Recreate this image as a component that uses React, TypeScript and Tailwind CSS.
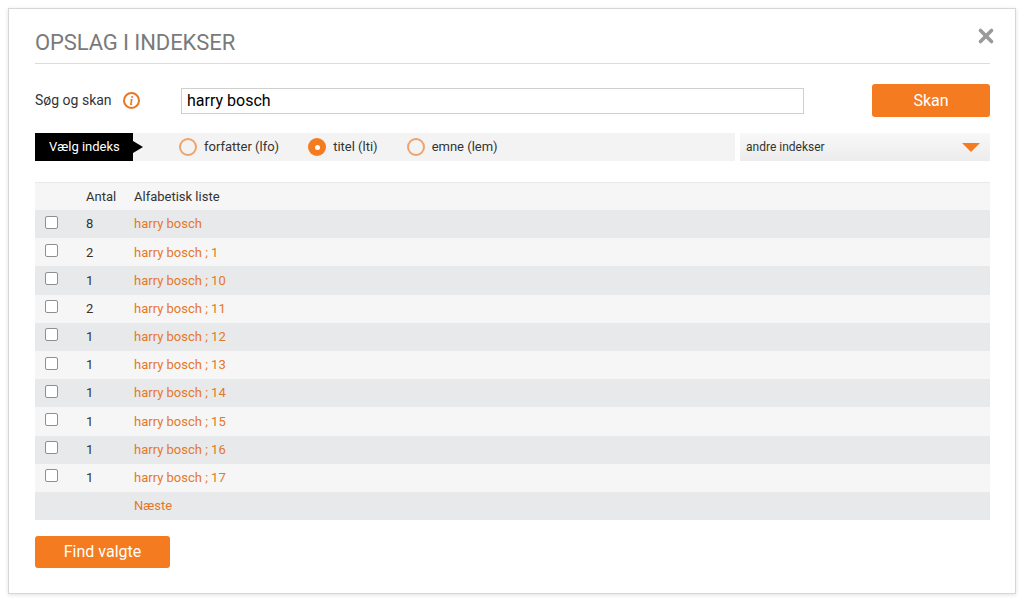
import { X } from 'lucide-react';

const rows = [
    { antal: 8, label: 'harry bosch' },
    { antal: 2, label: 'harry bosch ; 1' },
    { antal: 1, label: 'harry bosch ; 10' },
    { antal: 2, label: 'harry bosch ; 11' },
    { antal: 1, label: 'harry bosch ; 12' },
    { antal: 1, label: 'harry bosch ; 13' },
    { antal: 1, label: 'harry bosch ; 14' },
    { antal: 1, label: 'harry bosch ; 15' },
    { antal: 1, label: 'harry bosch ; 16' },
    { antal: 1, label: 'harry bosch ; 17' },
];

function Radio({ label, checked }: { label: string; checked?: boolean }) {
    return (
        <label className="flex items-center gap-[7px] text-[13px] text-[#333]">
            {checked ? (
                <span className="w-[18px] h-[18px] rounded-full bg-[#f47b20] flex items-center justify-center">
                    <span className="w-[5px] h-[5px] rounded-full bg-white" />
                </span>
            ) : (
                <span className="w-[18px] h-[18px] rounded-full border-2 border-[#eea36c] bg-[#f3f3f3]" />
            )}
            {label}
        </label>
    );
}

export default function App() {
    return (
        <div className="w-[1024px] h-[602px] bg-white pt-2 pl-2 font-['Roboto',sans-serif]">
            <div className="w-[1008px] h-[586px] bg-white border border-[#d6d6d6] shadow-[0_1px_4px_rgba(0,0,0,0.12)] pl-[26px] pr-[25px] pt-[20px] relative">
                {/* Header */}
                <div className="border-b border-[#dcdcdc] pb-[6px]">
                    <h1 className="text-[22px] leading-[28px] text-[#7a7a7a] tracking-[-0.1px]">OPSLAG I INDEKSER</h1>
                </div>
                <button className="absolute right-[18px] top-[16px] text-[#9a9a9a]">
                    <X className="w-[22px] h-[22px]" strokeWidth={4} />
                </button>

                {/* Search row */}
                <div className="flex items-center mt-[20px] h-[33px]">
                    <span className="text-[14px] text-[#333] w-[80px]">Søg og skan</span>
                    <span className="ml-[8px] w-[17px] h-[17px] rounded-full border-2 border-[#e4782a] text-[#e4782a] flex items-center justify-center text-[12px] italic font-bold font-['Liberation_Serif',serif] leading-none">i</span>
                    <div className="ml-[41px] w-[623px] h-[26px] border border-[#cfcfcf] flex items-center px-[5px] text-[16px] text-black">harry bosch</div>
                    <button className="ml-auto w-[118px] h-[33px] bg-[#f47b20] rounded-[3px] text-white text-[16px]">Skan</button>
                </div>

                {/* Index bar */}
                <div className="flex items-center mt-[16px] h-[28px]">
                    <div className="flex-1 flex items-center h-full bg-[#f3f3f3]">
                        <div className="relative h-full w-[98px] bg-black text-white text-[13px] flex items-center pl-[14px]">
                            Vælg indeks
                            <span className="absolute right-[-10px] top-[8px] w-0 h-0 border-y-[6px] border-y-transparent border-l-[10px] border-l-black" />
                        </div>
                        <div className="flex items-center ml-[46px] gap-[29px]">
                            <Radio label="forfatter (lfo)" />
                            <Radio label="titel (lti)" checked />
                            <Radio label="emne (lem)" />
                        </div>
                    </div>
                    <div className="ml-[5px] w-[250px] h-full flex items-center justify-between px-[6px] bg-gradient-to-b from-[#f8f8f8] to-[#ececec] text-[12px] text-[#333]">
                        andre indekser
                        <span className="w-0 h-0 border-x-[9px] border-x-transparent border-t-[9px] border-t-[#f47b20] mr-[4px]" />
                    </div>
                </div>

                {/* Table */}
                <div className="mt-[21px] border-t border-[#e8e8e8] text-[13px]">
                    <div className="flex items-center h-[27px] bg-[#f6f6f6] text-[#333]">
                        <span className="w-[51px]" />
                        <span className="w-[48px]">Antal</span>
                        <span>Alfabetisk liste</span>
                    </div>
                    {rows.map((row, i) => (
                        <div key={i} className={`flex items-center h-[28.2px] ${i % 2 === 0 ? 'bg-[#e8e9ea]' : 'bg-[#f6f6f6]'}`}>
                            <span className="w-[51px] pl-[10px] flex">
                                <span className="w-[13px] h-[13px] border border-[#8f8f8f] rounded-[2px] bg-white -mt-[4px]" />
                            </span>
                            <span className="w-[48px] text-[#333]">{row.antal}</span>
                            <span className="text-[#e4782a]">{row.label}</span>
                        </div>
                    ))}
                    <div className="flex items-center h-[28px] bg-[#e8e9ea]">
                        <span className="w-[99px]" />
                        <span className="text-[#e4782a]">Næste</span>
                    </div>
                </div>

                <button className="mt-[16px] w-[135px] h-[32px] bg-[#f47b20] rounded-[3px] text-white text-[16px]">Find valgte</button>
            </div>
        </div>
    );
}
